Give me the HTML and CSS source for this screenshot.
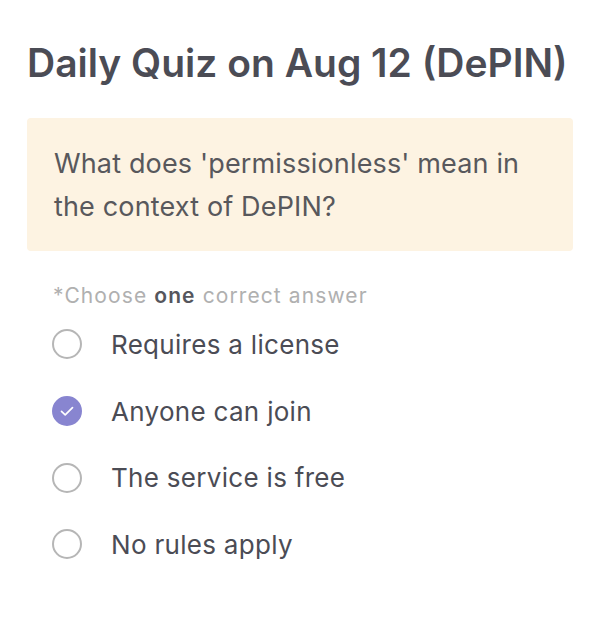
FILE: index.html
```html
<!DOCTYPE html>
<html>
<head>
  <title>Daily Quiz</title>
  <link rel="stylesheet" href="styles.css">
</head>
<body>
  <div class="quiz">
    <h1 class="quiz-title">Daily Quiz on Aug 12 (DePIN)</h1>
    <div class="question">What does 'permissionless' mean in the context of DePIN?</div>
    <div class="hint">*Choose <b>one</b> correct answer</div>
    <ul class="options">
      <li class="option"><span class="radio"></span>Requires a license</li>
      <li class="option"><span class="radio checked"><svg width="18" height="18" viewBox="0 0 18 18"><path d="M3.5 9.3 L7.2 12.8 L14.5 5.6" fill="none" stroke="#fff" stroke-width="1.7" stroke-linecap="round" stroke-linejoin="round"/></svg></span>Anyone can join</li>
      <li class="option"><span class="radio"></span>The service is free</li>
      <li class="option"><span class="radio"></span>No rules apply</li>
    </ul>
  </div>
</body>
</html>
```

FILE: styles.css
```css
body {
    margin: 0;
    background: #ffffff;
    font-family: Inter, "Noto Sans", sans-serif;
    color: #4b4c55;
}

.quiz {
    padding: 36px 27px 0 27px;
}

.quiz-title {
    margin: 0 0 28px 0;
    font-size: 39px;
    font-weight: 600;
    line-height: 54px;
    color: #4b4c55;
}

.question {
    background: #fdf3e2;
    border-radius: 4px;
    padding: 24px 27px 23px 27px;
    font-size: 27px;
    line-height: 43px;
    letter-spacing: 0.15px;
    color: #58585c;
    font-weight: 400;
}

.hint {
    margin-top: 32px;
    padding-left: 26px;
    font-size: 21px;
    letter-spacing: 1.1px;
    color: #b0b0b0;
}

.hint b {
    color: #55565d;
    font-weight: 600;
}

.options {
    list-style: none;
    margin: 3px 0 0 0;
    padding: 0 0 0 25px;
}

.option {
    display: flex;
    align-items: center;
    height: 66.7px;
    font-size: 26px;
    letter-spacing: 0.3px;
    color: #4b4c55;
}

.radio {
    width: 26px;
    height: 26px;
    border: 2px solid #b6b6b6;
    border-radius: 50%;
    margin-right: 29px;
    display: flex;
    align-items: center;
    justify-content: center;
    flex: none;
}

.radio.checked {
    background: #8885d0;
    border-color: #8885d0;
}
```
